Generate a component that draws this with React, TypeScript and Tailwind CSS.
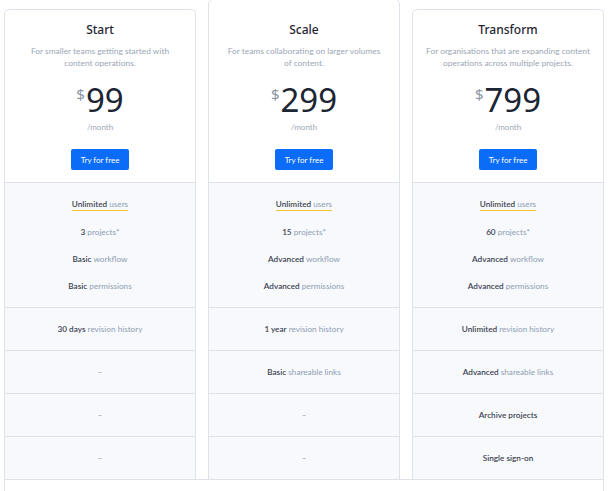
import React from 'react';

type Feature = { strong?: string; light?: string; underline?: boolean };

interface PlanProps {
  title: string;
  description: string;
  descClass?: string;
  price: string;
  raised?: boolean;
  features: Feature[];
  rows: (Feature | null)[];
}

const plans: PlanProps[] = [
  {
    title: 'Start',
    description: 'For smaller teams getting started with content operations.',
    price: '99',
    features: [
      { strong: 'Unlimited', light: 'users', underline: true },
      { strong: '3', light: 'projects*' },
      { strong: 'Basic', light: 'workflow' },
      { strong: 'Basic', light: 'permissions' },
    ],
    rows: [{ strong: '30 days', light: 'revision history' }, null, null, null],
  },
  {
    title: 'Scale',
    description: 'For teams collaborating on larger volumes of content.',
    descClass: 'max-w-[156px]',
    price: '299',
    raised: true,
    features: [
      { strong: 'Unlimited', light: 'users', underline: true },
      { strong: '15', light: 'projects*' },
      { strong: 'Advanced', light: 'workflow' },
      { strong: 'Advanced', light: 'permissions' },
    ],
    rows: [
      { strong: '1 year', light: 'revision history' },
      { strong: 'Basic', light: 'shareable links' },
      null,
      null,
    ],
  },
  {
    title: 'Transform',
    description: 'For organisations that are expanding content operations across multiple projects.',
    price: '799',
    features: [
      { strong: 'Unlimited', light: 'users', underline: true },
      { strong: '60', light: 'projects*' },
      { strong: 'Advanced', light: 'workflow' },
      { strong: 'Advanced', light: 'permissions' },
    ],
    rows: [
      { strong: 'Unlimited', light: 'revision history' },
      { strong: 'Advanced', light: 'shareable links' },
      { strong: 'Archive projects' },
      { strong: 'Single sign-on' },
    ],
  },
];

function FeatureText({ strong, light, underline }: Feature) {
  return (
    <span
      className={
        underline ? 'inline-block leading-[12px] border-b-[1.5px] border-b-[#f2c230]' : 'inline-block leading-[12px]'
      }
    >
      {strong && <span className="text-[#3b4352] font-semibold">{strong}</span>}
      {strong && light && ' '}
      {light && <span className="text-[#8d9db3]">{light}</span>}
    </span>
  );
}

function PlanCard({ title, description, descClass, price, raised, features, rows }: PlanProps) {
  return (
    <div
      className={`flex flex-col border-x border-t border-[#dfe3e9] rounded-t-[5px] bg-white ${
        raised ? 'mt-[-10px]' : ''
      }`}
    >
      <div className={`flex flex-col items-center px-3 pb-[12px] ${raised ? 'pt-[22px]' : 'pt-[12px]'}`}>
        <h2 className="font-['Noto_Sans',sans-serif] text-[12px] leading-[16px] font-medium text-[#1f2633]">
          {title}
        </h2>
        <p className={`mt-[7px] h-[24px] text-center text-[8.4px] leading-[12px] text-[#9ba6b6] ${descClass ?? ''}`}>
          {description}
        </p>
        <div className="mt-[13px] flex items-start font-['Noto_Sans',sans-serif] text-[#1c2533]">
          <span className="text-[15px] leading-[20px] mt-[2px] mr-[1px] text-[#8b95a5]">$</span>
          <span className="text-[33px] leading-[36px]">{price}</span>
        </div>
        <div className="mt-[3px] text-[8px] leading-[12px] text-[#9ba6b6]">/month</div>
        <button className="mt-[16px] h-[21px] px-[10px] bg-[#0b6cf7] text-white text-[8px] rounded-[2px]">
          Try for free
        </button>
      </div>
      <div className="border-t border-[#dfe3e9] bg-[#f8f9fc] py-2 text-center text-[8.2px]">
        {features.map((f, i) => (
          <div key={i} className="h-[27px] flex items-center justify-center">
            <FeatureText {...f} />
          </div>
        ))}
      </div>
      {rows.map((r, i) => (
        <div
          key={i}
          className="h-[43px] border-t border-[#dfe3e9] bg-[#f8f9fc] flex items-center justify-center text-[8.2px]"
        >
          {r ? <FeatureText {...r} /> : <span className="text-[#8d98a8]">–</span>}
        </div>
      ))}
    </div>
  );
}

export default function App() {
  return (
    <div className="w-[610px] h-[491px] overflow-hidden bg-white font-['Lato',sans-serif]">
      <div className="ml-[4px] w-[600px] pt-[9px]">
        <div className="grid grid-cols-3 gap-x-3 items-start">
          {plans.map((p) => (
            <PlanCard key={p.title} {...p} />
          ))}
        </div>
        <div className="h-[60px] border-x border-t border-[#dfe3e9]" />
      </div>
    </div>
  );
}
